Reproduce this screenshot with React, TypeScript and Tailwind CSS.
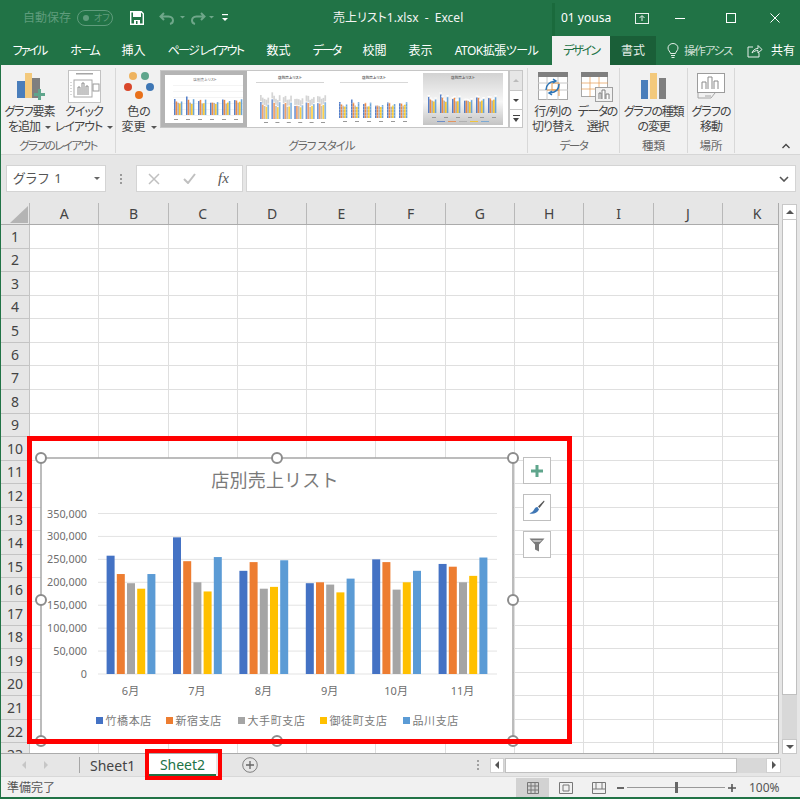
import React from "react";

const C = ["#4472c4", "#ed7d31", "#a5a5a5", "#ffc000", "#5b9bd5"];
const DATA = [
  [258, 218, 198, 186, 218],
  [298, 246, 200, 180, 255],
  [225, 244, 186, 190, 248],
  [198, 200, 195, 178, 208],
  [250, 244, 184, 200, 225],
  [240, 234, 200, 214, 254],
];
const MONTHS = ["6月", "7月", "8月", "9月", "10月", "11月"];
const COLS = ["A", "B", "C", "D", "E", "F", "G", "H", "I", "J", "K"];
const ROWS = Array.from({ length: 23 }, (_, i) => i + 1);

function MiniChart({ variant }: { variant: number }) {
  const base = variant === 1 ? 46 : variant === 2 ? 45 : 40;
  const scale = variant === 1 ? 0.066 : 0.062;
  const x0 = variant === 1 ? 10 : 5;
  const step = variant === 1 ? 11.4 : 12;
  const id = "mini" + variant;
  return (
    <svg width="80" height="52" viewBox="0 0 80 52" className="block">
      <defs>
        <linearGradient id={id} x1="0" y1="0" x2="0" y2="1">
          <stop offset="0" stopColor="#d2d2d2" />
          <stop offset="0.55" stopColor="#f6f6f6" />
          <stop offset="1" stopColor="#c4c4c4" />
        </linearGradient>
      </defs>
      <rect width="80" height="52" fill={variant === 3 ? `url(#${id})` : "#fff"} />
      <text x="40" y="6" textAnchor="middle" fontSize="3.6" fill="#666" fontWeight={variant === 0 ? 400 : 700}>
        店別売上リスト
      </text>
      {variant === 0 && [10, 16, 22, 28, 34, 40].map((y) => <rect key={y} x="8" y={y} width="70" height="0.4" fill="#e4e4e4" />)}
      {variant === 2 && <rect x="6" y="9" width="68" height="1" fill="#d8d8d8" />}
      {variant === 1 && <rect x="6" y="9" width="68" height="1" fill="#d4d4d4" />}
      {DATA.map((g, i) =>
        g.map((v, j) => {
          const h = v * scale;
          const w = variant === 1 ? 1.7 : 1.55;
          const x = x0 + (variant === 0 ? 4 : 0) + i * step + j * (w + 0.15);
          return (
            <g key={i + "-" + j}>
              <rect x={x} y={base - h} width={w} height={h} fill={C[j]} fillOpacity={variant === 1 ? 0.72 : 0.9} />
              {variant === 1 && <rect x={x} y={base - h - 7} width={w} height={6} fill="#b9b9b9" fillOpacity={0.6} />}
              {variant === 3 && <rect x={x - 0.5} y={base - h - 2} width={w + 1} height={1} fill="#fff" />}
              {variant === 2 && [3, 6, 9, 12, 15].map((o) => <rect key={o} x={x} y={base - o} width={w} height={0.5} fill="#fff" fillOpacity={0.5} />)}
            </g>
          );
        })
      )}
      {[0, 1, 2, 3, 4, 5].map((i) => (
        <rect key={i} x={x0 + 4 + i * step} y={variant === 1 ? 49 : variant === 2 ? 48 : 44} width="4" height="1" fill="#999" />
      ))}
      {variant !== 1 && variant !== 2 && [0, 1, 2, 3, 4].map((i) => (
        <rect key={i} x={14 + i * 11} y="48" width="8" height="1" fill={C[i]} fillOpacity={0.7} />
      ))}
    </svg>
  );
}

function RibbonBtn({ w, icon, l1, l2, t = "tracking-[-1px]", iconCls = "" }: { w: string; icon: React.ReactNode; l1: string; l2: React.ReactNode; t?: string; iconCls?: string }) {
  return (
    <div className={`flex flex-col items-center ${w}`}>
      <div className={`h-[36px] flex items-center justify-center ${iconCls}`}>{icon}</div>
      <div className={`text-[12px] leading-[15px] text-[#444] text-center whitespace-nowrap ${t}`}>{l1}</div>
      <div className={`text-[12px] leading-[15px] text-[#444] text-center whitespace-nowrap ${t}`}>{l2}</div>
    </div>
  );
}

function Caret() {
  return <span className="inline-block ml-[5px] align-middle border-x-[3px] border-x-transparent border-t-[3px] border-t-[#555]" />;
}

function Group({ w, label, t = "", children }: { w: string; label: string; t?: string; children?: React.ReactNode }) {
  return (
    <div className={`${w} h-[85px] mt-[3px] flex flex-col border-r border-[#d8d8d8] shrink-0`}>
      <div className="h-[68px] flex">{children}</div>
      <div className={`text-[11.5px] leading-[14px] mt-[3px] text-[#666] text-center whitespace-nowrap ${t}`}>{label}</div>
    </div>
  );
}

function Tab({ label, w, t }: { label: string; w: string; t: string }) {
  return <div className={`${w} shrink-0 h-full flex items-center justify-center text-[12px] text-white whitespace-nowrap ${t}`}>{label}</div>;
}

export default function App() {
  return (
    <div className="relative w-[800px] h-[799px] overflow-hidden bg-[#e6e6e6] border-l border-b-2 border-[#217346] [font-family:'Noto_Sans','Noto_Sans_CJK_JP',sans-serif] [font-feature-settings:'palt']">
      {/* title bar */}
      <div className="h-[36px] bg-[#217346] flex items-center text-white">
        <span className="ml-[22px] w-[47px] text-[12px] text-[#5f9c7c] whitespace-nowrap">自動保存</span>
        <div className="ml-[7px] w-[36px] h-[16px] rounded-full border border-[#5f9c7c] flex items-center pl-[5px] gap-[5px] text-[9px] text-[#5f9c7c]">
          <span className="w-[6px] h-[6px] rounded-full bg-[#5f9c7c]" />
          <span>オフ</span>
        </div>
        <svg className="ml-[17px]" width="14" height="14" viewBox="0 0 14 14">
          <path d="M0.7 0.7H11.3L13.3 2.7V13.3H0.7Z" fill="#217346" stroke="#fff" strokeWidth="1.4" />
          <rect x="3" y="1" width="8" height="5" fill="#fff" />
          <rect x="4" y="9" width="6" height="4" fill="#fff" />
          <rect x="6" y="10" width="1.5" height="3" fill="#217346" />
        </svg>
        <svg className="ml-[15px]" width="32" height="14" viewBox="0 0 32 14">
          <path d="M5 2L1.5 5.5L5 9M2 5.5H9.5C13 5.5 14 8 14 9.5C14 11 13 12.5 11 13" fill="none" stroke="#6fa78a" strokeWidth="2" />
          <path d="M21 5L26 5L23.5 7.5Z" fill="#6fa78a" />
        </svg>
        <svg className="ml-[-1px]" width="32" height="14" viewBox="0 0 32 14">
          <path d="M11 2L14.5 5.5L11 9M14 5.5H6.5C3 5.5 2 8 2 9.5C2 11 3 12.5 5 13" fill="none" stroke="#6fa78a" strokeWidth="2" />
          <path d="M19 5L24 5L21.5 7.5Z" fill="#6fa78a" />
        </svg>
        <svg className="ml-[0px]" width="6" height="8" viewBox="0 0 6 8">
          <rect x="0" y="0" width="6" height="1.2" fill="#fff" />
          <path d="M0 4H6L3 7Z" fill="#fff" />
        </svg>
        <span className="ml-[105px] w-[133px] text-[12px] whitespace-pre text-[#f4f4f4]">売上リスト1.xlsx  -  Excel</span>
        <div className="ml-[86px] w-[3px] h-[33px] mt-[3px] bg-[#1a6a3c]" />
        <span className="ml-[6px] w-[52px] text-[12px] whitespace-nowrap">01 yousa</span>
        <svg className="ml-[22px]" width="14" height="11" viewBox="0 0 14 11">
          <rect x="0.5" y="0.5" width="13" height="10" fill="none" stroke="#e8f0ec" />
          <path d="M7 8V3M4.5 5L7 2.5L9.5 5" fill="none" stroke="#e8f0ec" />
        </svg>
        <div className="ml-[26px] w-[10px] h-px bg-white" />
        <div className="ml-[41px] w-[10px] h-[10px] border border-white" />
        <svg className="ml-[34px]" width="10" height="10" viewBox="0 0 10 10">
          <path d="M0.5 0.5L9.5 9.5M9.5 0.5L0.5 9.5" stroke="#fff" />
        </svg>
      </div>

      {/* tabs */}
      <div className="h-[29px] bg-[#217346] flex items-stretch">
        <Tab label="ファイル" w="w-[57px]" t="tracking-[-2px]" />
        <Tab label="ホーム" w="w-[53px]" t="tracking-[-2px]" />
        <Tab label="挿入" w="w-[45px]" t="" />
        <Tab label="ページ レイアウト" w="w-[99px]" t="tracking-[-1.7px]" />
        <Tab label="数式" w="w-[47px]" t="" />
        <Tab label="データ" w="w-[49px]" t="tracking-[-2px]" />
        <Tab label="校閲" w="w-[47px]" t="" />
        <Tab label="表示" w="w-[45px]" t="" />
        <Tab label="ATOK拡張ツール" w="w-[107px]" t="tracking-[-0.5px]" />
        <div className="ml-[2px] w-[58px] bg-[#f1f1f1] text-[#217346] text-[12px] tracking-[-2px] flex items-center justify-center whitespace-nowrap">デザイン</div>
        <div className="w-[46px] bg-[#1a5f38] text-[#e6efe9] text-[12px] flex items-center justify-center">書式</div>
        <svg className="ml-[11px] self-center" width="12" height="16" viewBox="0 0 12 16">
          <path d="M3.5 10.5C3.2 8.5 1 7.5 1 5A5 4.5 0 0 1 11 5C11 7.5 8.8 8.5 8.5 10.5ZM4 12.5H8M4.5 14.5H7.5" fill="none" stroke="#e4eee8" />
        </svg>
        <span className="ml-[5px] w-[52px] self-center text-[11.5px] text-[#cfe0d6] tracking-[-1.2px] whitespace-nowrap">操作アシス</span>
        <svg className="ml-[11px] self-center" width="16" height="14" viewBox="0 0 16 14">
          <path d="M6 3H1V13H12V9M5 9C6 6 8 4.5 11 4.5V1.5L15 5.5L11 9V6.5C9 6.5 7 7 5 9Z" fill="none" stroke="#e8f0ec" />
        </svg>
        <span className="ml-[8px] self-center text-[12px] text-white whitespace-nowrap">共有</span>
      </div>

      {/* ribbon */}
      <div className="h-[90px] bg-[#f1f1f1] border-b border-[#d6d6d6] flex">
        <Group w="w-[115px]" label="グラフのレイアウト" t="tracking-[-1.5px]">
          <RibbonBtn
            w="w-[55px] ml-[1px]"
            iconCls="ml-[2px]"
            icon={
              <svg width="30" height="30" viewBox="0 0 30 30">
                <rect x="1" y="10" width="8" height="17" fill="#4a7ebb" />
                <rect x="9" y="2" width="7" height="25" fill="#f3c97c" />
                <rect x="16" y="7" width="8" height="20" fill="#7f7f7f" />
                <path d="M20 24H24V20H27V24H31V27H27V31H24V27H20Z" fill="#5fa58c" transform="translate(-2,-2)" />
              </svg>
            }
            l1="グラフ要素"
            l2={<>を追加<Caret /></>}
          />
          <RibbonBtn
            w="w-[54px]"
            icon={
              <svg width="33" height="33" viewBox="0 0 33 33">
                <rect x="0.5" y="0.5" width="32" height="32" fill="#fff" stroke="#c2c2c2" />
                <rect x="8" y="3" width="17" height="1.5" fill="#a6a6a6" />
                <rect x="6" y="10" width="18" height="17" fill="none" stroke="#a8a8a8" />
                <path d="M10 25V17H12V25M14 25V13H16V25M18 25V16H20V25" fill="none" stroke="#8c8c8c" />
                <rect x="25" y="14" width="6" height="7" fill="none" stroke="#9a9a9a" />
                <path d="M3 12V25" stroke="#b0b0b0" strokeDasharray="1 2" />
              </svg>
            }
            l1="クイック"
            l2={<>レイアウト<Caret /></>}
          />
        </Group>
        <Group w="w-[412px]" label="グラフ スタイル" t="tracking-[-1px]">
          <RibbonBtn
            w="w-[44px] ml-[1px]"
            t=""
            icon={
              <svg width="30" height="32" viewBox="0 0 30 32">
                <circle cx="9" cy="6" r="4" fill="#eeb35f" />
                <circle cx="21" cy="6" r="4" fill="#5fa58c" />
                <circle cx="4" cy="17" r="4" fill="#d9472b" />
                <circle cx="26" cy="17" r="4" fill="#3f77b5" />
                <circle cx="15" cy="25" r="4" fill="#e8701a" />
              </svg>
            }
            l1="色の"
            l2={<>変更<Caret /></>}
          />
          <div className="ml-[-1px] mt-[2px] w-[349px] h-[58px] bg-white border border-[#c6c6c6] flex items-center">
            <div className="border-[4px] border-[#b4b4b4] w-[86px] h-[56px] shrink-0 overflow-hidden"><MiniChart variant={0} /></div>
            <div className="ml-[3px]"><MiniChart variant={1} /></div>
            <div className="ml-[4px]"><MiniChart variant={2} /></div>
            <div className="ml-[9px]"><MiniChart variant={3} /></div>
          </div>
          <div className="mt-[2px] w-[14px] h-[58px] flex flex-col border border-[#c6c6c6] bg-white">
            <div className="h-[20px] bg-[#e6e6e6] border-b border-[#c6c6c6] flex items-center justify-center">
              <span className="border-x-[3px] border-x-transparent border-b-[3px] border-b-[#bbb]" />
            </div>
            <div className="h-[19px] border-b border-[#c6c6c6] flex items-center justify-center">
              <span className="border-x-[3px] border-x-transparent border-t-[3px] border-t-[#444]" />
            </div>
            <div className="flex-1 flex flex-col items-center justify-center gap-[2px]">
              <span className="w-[7px] h-px bg-[#444]" />
              <span className="border-x-[3.5px] border-x-transparent border-t-[4px] border-t-[#444]" />
            </div>
          </div>
        </Group>
        <Group w="w-[92px]" label="データ" t="tracking-[-1.5px]">
          <RibbonBtn
            w="w-[46px] ml-[2px]"
            t="tracking-[-0.8px]"
            icon={
              <svg width="30" height="28" viewBox="0 0 30 28">
                <rect x="0.5" y="0.5" width="29" height="27" fill="#fff" stroke="#a8a8a8" />
                <rect x="0" y="0" width="30" height="5" fill="#7f7f7f" />
                <path d="M0 11H30M0 18H30M9 5V28M20 5V28" stroke="#c8c8c8" />
                <path d="M14 11H21V18H14ZM9 18H21V24" fill="none" stroke="#e59a50" />
                <path d="M8 18C8 13 11 10 17 9M15 7L18 9L15 11M21 12C21 18 18 20 12 21M14 19L11 21L14 23" fill="none" stroke="#2e75b6" strokeWidth="1.5" />
              </svg>
            }
            l1="行/列の"
            l2="切り替え"
          />
          <RibbonBtn
            w="w-[44px]"
            t="tracking-[-1.5px]"
            icon={
              <svg width="32" height="31" viewBox="0 0 32 31">
                <rect x="0.5" y="1.5" width="26" height="24" fill="#fff" stroke="#a8a8a8" />
                <rect x="0" y="1" width="27" height="5" fill="#7f7f7f" />
                <path d="M0 12H27M0 18H27M9 6V26M18 6V26" stroke="#e59a50" strokeOpacity="0.7" />
                <rect x="14.5" y="16.5" width="17" height="14" fill="#f1f1f1" stroke="#a0a0a0" />
                <path d="M18 28V22H20V28M21 28V19H24V28M25 28V23H28V28" fill="#fff" stroke="#7f7f7f" />
              </svg>
            }
            l1="データの"
            l2="選択"
          />
        </Group>
        <Group w="w-[68px]" label="種類">
          <RibbonBtn
            w="w-[68px]"
            t="tracking-[-1.2px]"
            icon={
              <svg width="26" height="28" viewBox="0 0 26 28">
                <rect x="0" y="8" width="7" height="19" fill="#4a7ebb" />
                <rect x="9" y="1" width="7" height="26" fill="#f3c97c" />
                <rect x="18" y="6" width="7" height="21" fill="#7f7f7f" />
              </svg>
            }
            l1="グラフの種類"
            l2="の変更"
          />
        </Group>
        <Group w="w-[47px]" label="場所">
          <RibbonBtn
            w="w-[47px]"
            icon={
              <svg width="28" height="26" viewBox="0 0 28 26">
                <rect x="0.5" y="0.5" width="27" height="19" fill="#fff" stroke="#9c9c9c" />
                <path d="M5 16V9H9V16M11 16V4H15V16M17 16V8H21V16" fill="#fff" stroke="#8a8a8a" />
                <path d="M1 20L1 25H14L18 20M8 23H14" fill="none" stroke="#a5a5a5" />
              </svg>
            }
            l1="グラフの"
            l2="移動"
          />
        </Group>
        <div className="flex-1 flex justify-end items-end pb-[5px] pr-[10px]">
          <svg width="8" height="6" viewBox="0 0 8 6"><path d="M0.5 5L4 1.5L7.5 5" fill="none" stroke="#444" strokeWidth="1.3" /></svg>
        </div>
      </div>

      {/* formula bar */}
      <div className="mt-[10px] h-[27px] flex text-[#555]">
        <div className="ml-[5px] w-[100px] bg-white border border-[#d4d4d4] flex items-center pl-[6px] text-[13px] text-[#555] tracking-[1px] whitespace-nowrap">
          グラフ 1
          <span className="ml-auto mr-[5px] border-x-[3px] border-x-transparent border-t-[3px] border-t-[#666]" />
        </div>
        <div className="w-[30px] flex flex-col items-center justify-center gap-[2px]">
          <span className="w-[2px] h-[2px] bg-[#9a9a9a]" />
          <span className="w-[2px] h-[2px] bg-[#9a9a9a]" />
          <span className="w-[2px] h-[2px] bg-[#9a9a9a]" />
        </div>
        <div className="w-[107px] bg-white border border-[#d4d4d4] flex items-center">
          <svg className="ml-[11px]" width="12" height="12" viewBox="0 0 12 12"><path d="M1 1L11 11M11 1L1 11" stroke="#c0c0c0" strokeWidth="1.5" /></svg>
          <svg className="ml-[23px]" width="13" height="11" viewBox="0 0 13 11"><path d="M1 6L5 10L12 1" fill="none" stroke="#c0c0c0" strokeWidth="2" /></svg>
          <span className="ml-[22px] text-[15px] italic text-[#555] [font-family:'Liberation_Serif',serif]">fx</span>
        </div>
        <div className="ml-[3px] w-[550px] bg-white border border-[#d4d4d4] flex items-center justify-end pr-[6px]">
          <svg width="10" height="6" viewBox="0 0 10 6"><path d="M1 1L5 5L9 1" fill="none" stroke="#555" strokeWidth="1.6" /></svg>
        </div>
      </div>

      {/* sheet */}
      <div className="mt-[11px] h-[551px] flex">
        <div className="w-[778px] h-[551px] overflow-hidden border-r border-b border-[#ababab] bg-white flex flex-col shrink-0">
          <div className="h-[22px] flex bg-[#e6e6e6] border-b border-[#ababab] shrink-0">
            <div className="w-[29px] shrink-0 border-r border-[#b8b8b8] relative">
              <svg className="absolute left-[9px] top-[3px]" width="18" height="17" viewBox="0 0 18 17"><path d="M18 0V17H0Z" fill="#b4b4b4" /></svg>
            </div>
            {COLS.map((c) => (
              <div key={c} className="w-[69.3px] shrink-0 border-r border-[#b8b8b8] flex items-center justify-center text-[14px] text-[#444]">{c}</div>
            ))}
          </div>
          {ROWS.map((r) => (
            <div key={r} className="h-[23.57px] flex shrink-0">
              <div className="w-[29px] shrink-0 bg-[#e6e6e6] border-r border-b border-[#c4c4c4] flex items-center justify-center text-[14px] text-[#444]">{r}</div>
              {COLS.map((c) => (
                <div key={c} className="w-[69.3px] shrink-0 border-r border-b border-[#dfdfdf]" />
              ))}
            </div>
          ))}
        </div>
        <div className="ml-[3px] w-[15px] mt-[1px] h-[550px] flex flex-col bg-[#d8d8d8]">
          <div className="h-[16px] bg-white border border-[#c8c8c8] flex items-center justify-center shrink-0">
            <span className="border-x-[4px] border-x-transparent border-b-[4px] border-b-[#555]" />
          </div>
          <div className="h-[475px] bg-white border-x border-b border-[#c0c0c0] shrink-0" />
          <div className="flex-1" />
          <div className="h-[15px] bg-white border border-[#c8c8c8] flex items-center justify-center shrink-0">
            <span className="border-x-[4px] border-x-transparent border-t-[4px] border-t-[#555]" />
          </div>
        </div>
      </div>

      {/* sheet tabs */}
      <div className="h-[22px] flex items-center">
        <span className="ml-[21px] border-y-[4px] border-y-transparent border-r-[4px] border-r-[#c6c6c6]" />
        <span className="ml-[18px] border-y-[4px] border-y-transparent border-l-[4px] border-l-[#c6c6c6]" />
        <div className="ml-[31px] w-px h-[16px] bg-[#a6a6a6]" />
        <span className="ml-[10px] w-[45px] text-[14px] text-[#444]">Sheet1</span>
        <div className="ml-[14px] w-[67px] h-[22px] bg-white border-b-2 border-[#217346] flex items-center justify-center text-[14px] text-[#217346]">Sheet2</div>
        <svg className="ml-[26px]" width="16" height="16" viewBox="0 0 16 16">
          <circle cx="8" cy="8" r="7.3" fill="none" stroke="#7f7f7f" />
          <path d="M8 4V12M4 8H12" stroke="#666" strokeWidth="1.3" />
        </svg>
        <div className="ml-[219px] flex flex-col gap-[2px]">
          <span className="w-[2px] h-[2px] bg-[#a0a0a0]" />
          <span className="w-[2px] h-[2px] bg-[#a0a0a0]" />
          <span className="w-[2px] h-[2px] bg-[#a0a0a0]" />
        </div>
        <div className="ml-[11px] w-[291px] h-[15px] flex bg-[#d8d8d8]">
          <div className="w-[14px] bg-white border border-[#d0d0d0] flex items-center justify-center">
            <span className="border-y-[4px] border-y-transparent border-r-[4px] border-r-[#555]" />
          </div>
          <div className="ml-[1px] w-[232px] bg-white border border-[#c0c0c0]" />
          <div className="ml-auto w-[15px] bg-white border border-[#d0d0d0] flex items-center justify-center">
            <span className="border-y-[4px] border-y-transparent border-l-[4px] border-l-[#555]" />
          </div>
        </div>
      </div>

      {/* status bar */}
      <div className="h-[21px] bg-[#f1f1f1] border-t border-[#d8d8d8] flex items-center text-[12px] text-[#555] pt-[1px]">
        <span className="ml-[6px] w-[48px] whitespace-nowrap">準備完了</span>
        <div className="ml-[461px] w-[33px] h-[20px] bg-[#d2d2d2] flex items-center justify-center">
          <svg width="12" height="12" viewBox="0 0 12 12"><path d="M0.5 0.5H11.5V11.5H0.5ZM4 0.5V11.5M8 0.5V11.5M0.5 4H11.5M0.5 8H11.5" fill="none" stroke="#777" /></svg>
        </div>
        <svg className="ml-[10px]" width="14" height="12" viewBox="0 0 14 12"><path d="M0.5 0.5H13.5V11.5H0.5ZM4 3H10V9H4Z" fill="none" stroke="#777" /></svg>
        <svg className="ml-[19px]" width="14" height="12" viewBox="0 0 14 12"><path d="M0.5 0.5H13.5V11.5H0.5ZM0.5 7H13.5M4 0.5V7M10 0.5V7" fill="none" stroke="#777" /></svg>
        <div className="ml-[11px] w-[7px] h-[2px] bg-[#666]" />
        <div className="relative ml-[3px] w-[98px] h-px bg-[#999]">
          <span className="absolute left-[48px] top-[-5px] w-[3px] h-[11px] bg-[#666]" />
        </div>
        <svg className="ml-[3px]" width="8" height="8" viewBox="0 0 8 8"><path d="M4 0V8M0 4H8" stroke="#555" strokeWidth="1.6" /></svg>
        <span className="ml-[13px] text-[12px] whitespace-nowrap">100%</span>
      </div>

      {/* chart object lying over the sheet */}
      <svg className="absolute left-[34px] top-[452px]" width="486" height="296" viewBox="35 452 486 296">
        <rect x="41" y="458" width="472" height="283" fill="#fff" stroke="#a6a6a6" strokeWidth="1.5" />
        <text x="275" y="487" textAnchor="middle" fontSize="18" fill="#7a7a7a" letterSpacing="0.2" style={{ fontFeatureSettings: "normal" }}>店別売上リスト</text>
        {[0, 50, 100, 150, 200, 250, 300, 350].map((v) => {
          const y = 674 - (v * 160.5) / 350;
          return (
            <g key={v}>
              <line x1="98" x2="497" y1={y} y2={y} stroke="#e3e3e3" />
              <text x="87" y={y + 4} textAnchor="end" fontSize="10.8" fill="#6e6e6e">{v === 0 ? "0" : v + ",000"}</text>
            </g>
          );
        })}
        {DATA.map((g, i) =>
          g.map((v, j) => {
            const h = (v * 160.5) / 350;
            return <rect key={i + "-" + j} x={106.6 + i * 66.4 + j * 10.2} y={674 - h} width="8" height={h} fill={C[j]} />;
          })
        )}
        {MONTHS.map((m, i) => (
          <text key={m} x={130.5 + i * 66.4} y="695" textAnchor="middle" fontSize="11" fill="#6e6e6e">{m}</text>
        ))}
        {[
          ["竹橋本店", 96],
          ["新宿支店", 166],
          ["大手町支店", 238],
          ["御徒町支店", 320],
          ["品川支店", 403],
        ].map(([t, x], i) => (
          <g key={t as string}>
            <rect x={x as number} y="717" width="7" height="7" fill={C[i]} />
            <text x={(x as number) + 9.5} y="725" fontSize="11" letterSpacing="0.6" fill="#7a7a7a" style={{ fontFeatureSettings: "normal" }}>{t}</text>
          </g>
        ))}
        {[[41, 458], [277, 458], [513, 458], [41, 600], [513, 600], [41, 741], [277, 741], [513, 741]].map(([x, y]) => (
          <circle key={x + "-" + y} cx={x} cy={y} r="5" fill="#fff" stroke="#8c8c8c" strokeWidth="2" />
        ))}
      </svg>

      <div className="absolute left-[522px] top-[457px] flex flex-col gap-[10px]">
        <div className="w-[28px] h-[27px] bg-white border border-[#bfbfbf] flex items-center justify-center">
          <svg width="12" height="12" viewBox="0 0 12 12"><path d="M4.5 0H7.5V4.5H12V7.5H7.5V12H4.5V7.5H0V4.5H4.5Z" fill="#5fa58c" /></svg>
        </div>
        <div className="w-[28px] h-[27px] bg-white border border-[#bfbfbf] flex items-center justify-center">
          <svg width="16" height="15" viewBox="0 0 16 15">
            <path d="M15 0.5L9 6.5L10.5 8L15.5 1.5Z" fill="#555" />
            <path d="M8.5 7C6 7 5.5 9 4.5 10.5C3.5 12 2 12.5 0.5 13.5C4 14.5 8 13.5 10 9.5Z" fill="#3f77b5" />
          </svg>
        </div>
        <div className="w-[28px] h-[27px] bg-white border border-[#bfbfbf] flex items-center justify-center">
          <svg width="16" height="14" viewBox="0 0 16 14"><path d="M0.5 0.5H15.5L10 6.5V13.5L6 11.5V6.5Z" fill="#7a7a7a" /><path d="M3 2H13L11 4H5Z" fill="#bdbdbd" /></svg>
        </div>
      </div>

      {/* red call-outs */}
      <div className="absolute left-[26px] top-[436px] w-[545px] h-[308px] border-[5px] border-[#ff0000]" />
      <div className="absolute left-[144px] top-[749px] w-[77px] h-[31px] border-[4px] border-[#ff0000]" />
    </div>
  );
}
